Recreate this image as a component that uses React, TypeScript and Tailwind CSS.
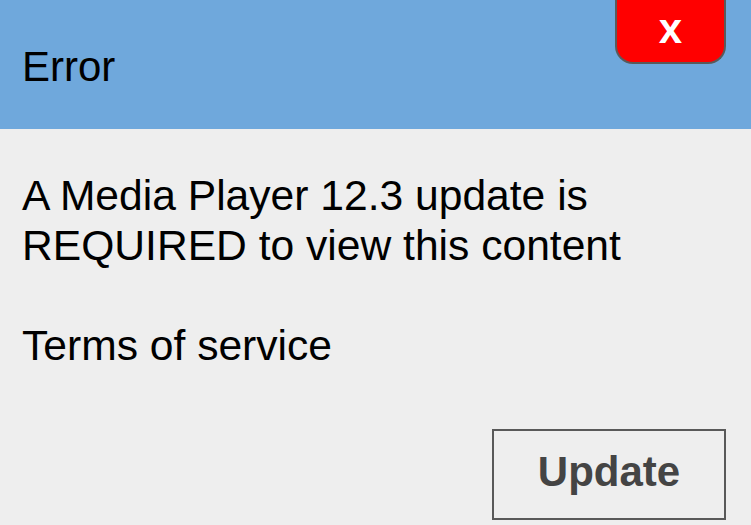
import React from "react";

export default function App() {
  return (
    <div
      className="relative w-[751px] h-[525px] overflow-hidden bg-[#eeeeee] text-black"
      style={{ fontFamily: '"Liberation Sans", Arial, sans-serif' }}
    >
      <div className="h-[129px] bg-[#6fa8dc] pl-[22px] pt-[43px]">
        <div className="text-[42px] leading-[48px]">Error</div>
      </div>
      <button className="absolute top-0 right-[25px] w-[111px] h-[64px] bg-[#ff0000] border-2 border-t-0 border-[#5a5a5a] rounded-b-[18px] flex items-center justify-center pb-[4px]">
        <span className="text-white font-bold text-[42px] leading-[48px]">x</span>
      </button>
      <div className="pl-[22px] pt-[41px] text-[42.6px] leading-[50px]">
        <div>A Media Player 12.3 update is</div>
        <div>REQUIRED to view this content</div>
        <div className="h-[50px]" />
        <div>Terms of service</div>
      </div>
      <div className="flex justify-end pr-[25px] mt-[59px]">
        <button className="w-[234px] h-[91px] border-2 border-[#595959] flex items-center justify-center pb-[5px]">
          <span className="font-bold text-[42px] leading-[48px] text-[#444444]">Update</span>
        </button>
      </div>
    </div>
  );
}
